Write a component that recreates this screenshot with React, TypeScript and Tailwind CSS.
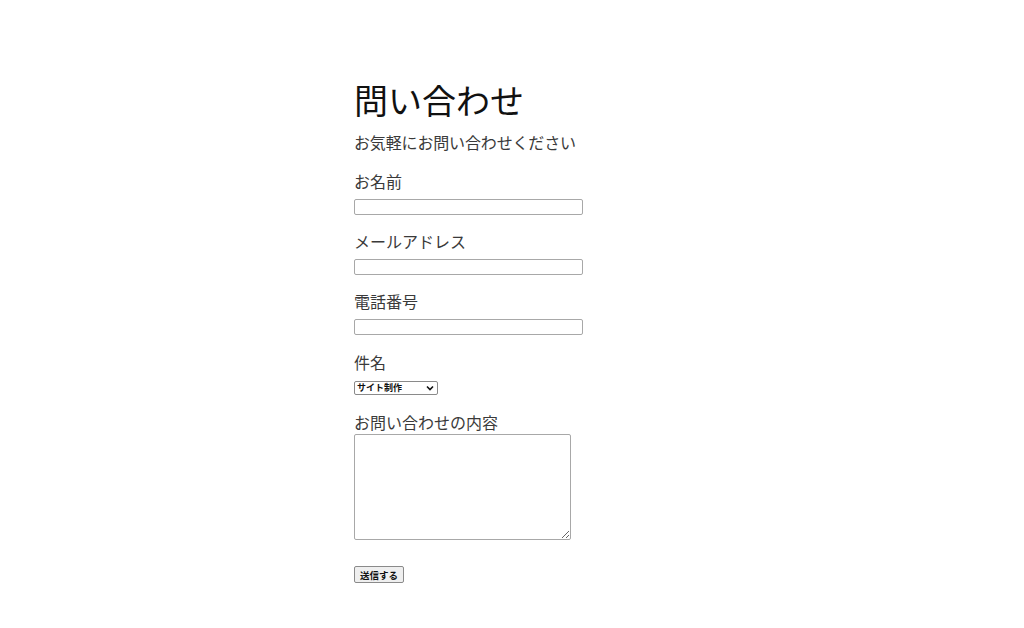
import React from "react";

const font = { fontFamily: '"Noto Sans CJK JP", "Noto Sans", sans-serif' };

export default function App() {
  return (
    <div className="min-h-[628px] w-full bg-white" style={font}>
      <div className="mx-auto w-[316px] pt-[79px] flex flex-col items-start">
        <h1 className="text-[34px] leading-[41px] text-[#111] font-normal">問い合わせ</h1>
        <p className="mt-[10px] text-[16px] leading-[24px] text-[#3a3a3a] tracking-[-0.15px]">お気軽にお問い合わせください</p>

        <label className="mt-[15px] text-[16px] leading-[24px] text-[#3a3a3a]">お名前</label>
        <input type="text" className="mt-[6px] w-[229px] h-[16px] border border-[#a8a8a8] rounded-[2px] bg-white outline-none" />

        <label className="mt-[14px] text-[16px] leading-[24px] text-[#3a3a3a]">メールアドレス</label>
        <input type="text" className="mt-[6px] w-[229px] h-[16px] border border-[#a8a8a8] rounded-[2px] bg-white outline-none" />

        <label className="mt-[14px] text-[16px] leading-[24px] text-[#3a3a3a]">電話番号</label>
        <input type="text" className="mt-[6px] w-[229px] h-[16px] border border-[#a8a8a8] rounded-[2px] bg-white outline-none" />

        <label className="mt-[15px] text-[16px] leading-[24px] text-[#3a3a3a]">件名</label>
        <div className="mt-[7px] w-[84px] h-[14px] border border-[#8a8a8a] rounded-[2px] bg-white flex items-center justify-between pl-[2px] pr-[3px]">
          <span className="text-[9px] leading-[12px] font-bold text-[#111]">サイト制作</span>
          <svg width="8" height="6" viewBox="0 0 8 6">
            <path d="M1 1.5 L4 4.5 L7 1.5" stroke="#111" strokeWidth="1.6" fill="none" />
          </svg>
        </div>

        <label className="mt-[16px] text-[16px] leading-[23px] text-[#3a3a3a]">お問い合わせの内容</label>
        <textarea className="mt-0 w-[217px] h-[106px] border border-[#a8a8a8] rounded-[2px] bg-white outline-none" />

        <button className="mt-[26px] w-[50px] h-[17px] border border-[#8a8a8a] rounded-[2px] bg-[#efefef] text-[9.5px] leading-[12px] font-bold text-[#111] flex items-center justify-center">
          送信する
        </button>
      </div>
    </div>
  );
}
